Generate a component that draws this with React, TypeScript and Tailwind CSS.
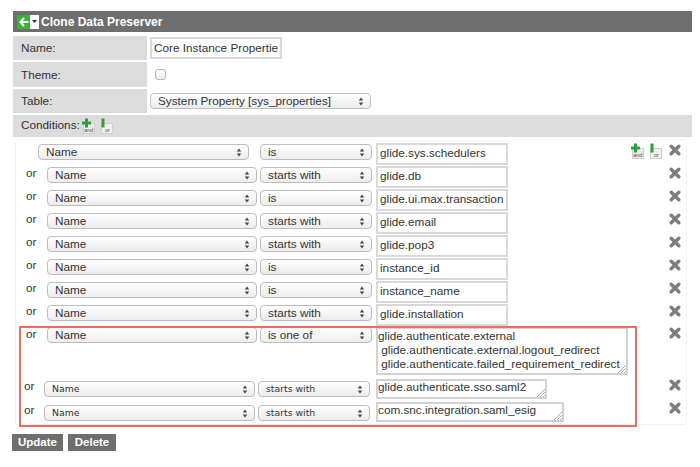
const font = "font-['Liberation_Sans',Arial,sans-serif]";

const Chevrons = () => (
  <svg width="6" height="9" viewBox="0 0 6 9" className="shrink-0">
    <path d="M3 0.5 5.2 3.4H0.8Z M3 8.5 0.8 5.6H5.2Z" fill="#444" />
  </svg>
);

const Select = ({ label, width, small }: { label: string; width: string; small?: boolean }) => (
  <div
    className={`${width} h-[16px] flex items-center justify-between rounded-[4px] border border-[#bdbdbd] bg-gradient-to-b from-white to-[#ececec] pl-[7px] pr-[6px] text-[#333] shrink-0 ${
      small ? "font-['DejaVu_Sans',sans-serif] text-[9.3px]" : "text-[11.75px]"
    }`}
  >
    <span>{label}</span>
    <Chevrons />
  </div>
);

const Cross = () => (
  <svg width="12" height="12" viewBox="0 0 12 12">
    <path d="M2.2 2.2 9.8 9.8M9.8 2.2 2.2 9.8" stroke="#7d7d7d" strokeWidth="3.4" strokeLinecap="round" />
  </svg>
);

const AndIcon = () => (
  <svg width="14" height="16" viewBox="0 0 14 16">
    <rect x="2.5" y="5.5" width="11" height="10" fill="#ebebeb" stroke="#cfcfcf" />
    <text x="3.2" y="14" fontSize="5.5" fill="#555" fontFamily="Liberation Sans">and</text>
    <path d="M4 0.5h3v3h3v3H7v3H4v-3H1v-3h3z" fill="#2f9e3a" />
  </svg>
);

const OrIcon = () => (
  <svg width="14" height="16" viewBox="0 0 14 16">
    <rect x="1.5" y="5.5" width="11" height="10" fill="#f0f0f0" stroke="#cfcfcf" />
    <text x="5" y="14" fontSize="5.5" fill="#555" fontFamily="Liberation Sans">or</text>
    <rect x="1.5" y="0.5" width="3" height="9" fill="#2f9e3a" />
  </svg>
);

const Resize = () => (
  <svg width="9" height="9" viewBox="0 0 9 9" className="absolute right-0 bottom-0">
    <path d="M1 9 9 1M4 9 9 4M7 9 9 7" stroke="#999" strokeWidth="0.8" />
  </svg>
);

const FormRow = ({ label, height, children }: { label: string; height: string; children: React.ReactNode }) => (
  <div className={`flex ${height} gap-[2px]`}>
    <div className="w-[134px] bg-[#dcdcdc] flex items-center pl-[8px] text-[11.75px] text-[#333]">{label}</div>
    <div className="flex-1 flex items-center pl-[1px]">{children}</div>
  </div>
);

const rows = [
  { op: "starts with", value: "glide.db" },
  { op: "is", value: "glide.ui.max.transaction" },
  { op: "starts with", value: "glide.email" },
  { op: "starts with", value: "glide.pop3" },
  { op: "is", value: "instance_id" },
  { op: "is", value: "instance_name" },
  { op: "starts with", value: "glide.installation" },
];

const TextBox = ({ value }: { value: string }) => (
  <div className="w-[132px] h-[22px] border-2 border-[#d9d9d9] bg-white flex items-center pl-[2px] pb-[2px] text-[11.75px] text-[#333] overflow-hidden whitespace-nowrap shrink-0">
    {value}
  </div>
);

const Or = ({ className }: { className: string }) => (
  <span className={`w-[21px] text-[11.75px] text-[#333] shrink-0 ${className}`}>or</span>
);

export default function App() {
  return (
    <div className={`relative w-[700px] h-[467px] bg-white overflow-hidden pt-[11px] pl-[13px] pr-[8px] ${font}`}>
      <div className="h-[21px] bg-[#6e6e6e] flex items-center pl-[4px] text-white font-bold text-[12px]">
        <div className="w-[13px] h-[14px] bg-[#33b533] flex items-center justify-center">
          <svg width="10" height="10" viewBox="0 0 10 10">
            <path d="M5 1 1.5 5 5 9M2 5h7.5" stroke="white" strokeWidth="2" fill="none" />
          </svg>
        </div>
        <div className="w-[9px] h-[14px] bg-white flex items-center justify-center mr-[2px]">
          <svg width="5" height="3" viewBox="0 0 5 3">
            <path d="M0 0h5L2.5 3z" fill="#333" />
          </svg>
        </div>
        <span>Clone Data Preserver</span>
      </div>

      <div className="mt-[4px] flex flex-col gap-[2px] w-[400px]">
        <FormRow label="Name:" height="h-[24px]">
          <div className="w-[132px] h-[22px] border-2 border-[#d9d9d9] bg-white flex items-center pl-[2px] text-[11.75px] text-[#333] overflow-hidden whitespace-nowrap">
            Core Instance Propertie
          </div>
        </FormRow>
        <FormRow label="Theme:" height="h-[25px]">
          <div className="ml-[5px] w-[11px] h-[11px] rounded-[3px] border border-[#b5b5b5] bg-gradient-to-b from-white to-[#eee]" />
        </FormRow>
        <FormRow label="Table:" height="h-[24px]">
          <Select label="System Property [sys_properties]" width="w-[221px]" />
        </FormRow>
      </div>

      <div className="mt-[2px] h-[22px] bg-[#dcdcdc] flex items-start pl-[8px] text-[11.75px] text-[#333] gap-[1px]">
        <span className="mt-[1px]">Conditions:</span>
        <span className="mt-[3px]"><AndIcon /></span>
        <span className="w-[3px]" />
        <span className="mt-[3px]"><OrIcon /></span>
      </div>

      <div className="relative ml-[2px] mr-[5px] mt-[3px] h-[285px] border border-[#f3f3f3] rounded-[3px] pt-[2px]">
        <div className="h-[23px] flex items-start">
          <div className="pl-[22px] pt-[1px] flex gap-[11px]">
            <Select label="Name" width="w-[211px]" />
            <Select label="is" width="w-[112px]" />
          </div>
          <div className="ml-[4px]">
            <TextBox value="glide.sys.schedulers" />
          </div>
          <div className="ml-auto flex items-start gap-[5px] pr-[5px]">
            <AndIcon />
            <OrIcon />
            <span className="ml-[1px] pt-[1px]"><Cross /></span>
          </div>
        </div>

        {rows.map((row) => (
          <div key={row.value} className="h-[23px] flex items-start">
            <Or className="ml-[10px] -mt-[2px]" />
            <div className="pt-[1px] flex gap-[3px]">
              <Select label="Name" width="w-[210px]" />
              <Select label={row.op} width="w-[112px]" />
            </div>
            <div className="ml-[4px]">
              <TextBox value={row.value} />
            </div>
            <div className="ml-auto pr-[5px] pt-[1px]"><Cross /></div>
          </div>
        ))}

        <div className="h-[52px] flex items-start">
          <Or className="ml-[10px] -mt-[2px]" />
          <div className="flex gap-[3px]">
            <Select label="Name" width="w-[210px]" />
            <Select label="is one of" width="w-[112px]" />
          </div>
          <div className="relative ml-[4px] w-[252px] h-[48px] border-2 border-[#d2d2d2] bg-white text-[11.75px] leading-[14px] text-[#333] whitespace-pre">
            {"glide.authenticate.external\n glide.authenticate.external.logout_redirect\n glide.authenticate.failed_requirement_redirect"}
            <Resize />
          </div>
          <div className="ml-auto pr-[5px]"><Cross /></div>
        </div>

        <div className="h-[23px] flex items-start">
          <Or className="ml-[8px] -mt-[2px]" />
          <div className="-ml-[1px] pt-[2px] flex gap-[3px]">
            <Select label="Name" width="w-[211px]" small />
            <Select label="starts with" width="w-[112px]" small />
          </div>
          <div className="relative ml-[6px] w-[171px] h-[20px] border-2 border-[#d2d2d2] bg-white text-[11.75px] leading-[12px] text-[#333]">
            glide.authenticate.sso.saml2
            <Resize />
          </div>
          <div className="ml-auto pr-[5px]"><Cross /></div>
        </div>

        <div className="h-[23px] flex items-start">
          <Or className="ml-[8px] -mt-[1px]" />
          <div className="-ml-[1px] pt-[3px] flex gap-[3px]">
            <Select label="Name" width="w-[211px]" small />
            <Select label="starts with" width="w-[112px]" small />
          </div>
          <div className="relative ml-[6px] w-[188px] h-[20px] border-2 border-[#d2d2d2] bg-white text-[11.75px] leading-[12px] text-[#333]">
            com.snc.integration.saml_esig
            <Resize />
          </div>
          <div className="ml-auto pr-[5px]"><Cross /></div>
        </div>
      </div>

      <div className="mt-[9px] -ml-[1px] flex gap-[5px]">
        <button className="h-[17px] w-[51px] bg-[#6e6e6e] text-white font-bold text-[11.5px] flex items-center justify-center">Update</button>
        <button className="h-[17px] w-[48px] bg-[#6e6e6e] text-white font-bold text-[11.5px] flex items-center justify-center">Delete</button>
      </div>

      <div className="absolute left-[19px] top-[326px] w-[618px] h-[101px] border-2 border-[#ef6a60] pointer-events-none" />
    </div>
  );
}
